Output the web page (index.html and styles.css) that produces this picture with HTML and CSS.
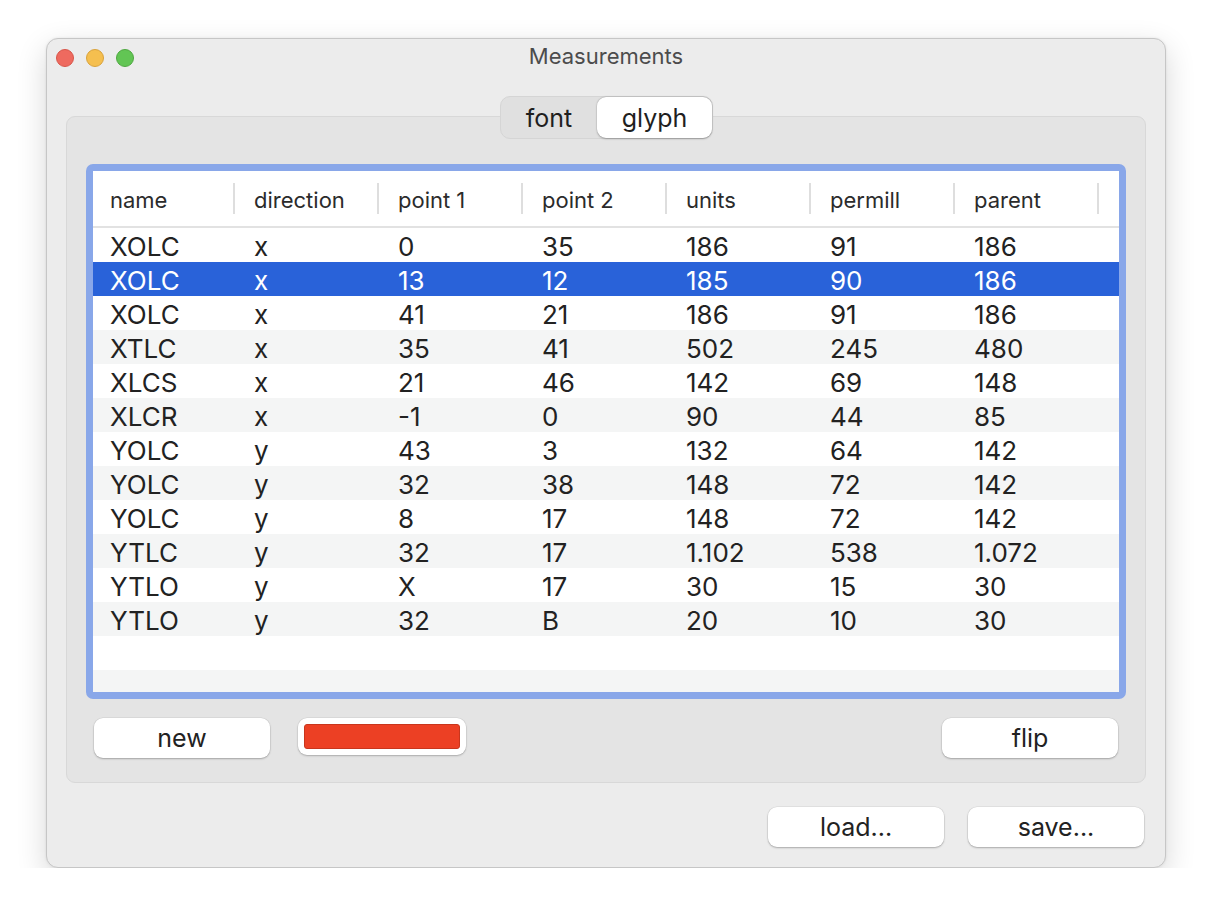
FILE: index.html
```html
<!DOCTYPE html>
<html>
<head>
<meta charset="utf-8">
<title>Measurements</title>
<link rel="stylesheet" href="styles.css">
</head>
<body>
<div class="window">
  <div class="titlebar">
    <div class="lights">
      <span class="light red"></span>
      <span class="light yellow"></span>
      <span class="light green"></span>
    </div>
    <div class="title">Measurements</div>
    <div></div>
  </div>

  <div class="segrow">
    <div class="segmented">
      <div class="seg">font</div>
      <div class="seg active">glyph</div>
    </div>
  </div>

  <div class="tabbox">
    <div class="ring">
      <div class="table">
        <div class="thead">
          <div class="hcell">name</div><div class="sep"></div>
          <div class="hcell">direction</div><div class="sep"></div>
          <div class="hcell">point 1</div><div class="sep"></div>
          <div class="hcell">point 2</div><div class="sep"></div>
          <div class="hcell">units</div><div class="sep"></div>
          <div class="hcell">permill</div><div class="sep"></div>
          <div class="hcell">parent</div><div class="sep"></div>
        </div>
        <div class="tbody">
          <div class="row"><div class="cell">XOLC</div><div class="cell">x</div><div class="cell">0</div><div class="cell">35</div><div class="cell">186</div><div class="cell">91</div><div class="cell">186</div></div>
          <div class="row selected"><div class="cell">XOLC</div><div class="cell">x</div><div class="cell">13</div><div class="cell">12</div><div class="cell">185</div><div class="cell">90</div><div class="cell">186</div></div>
          <div class="row"><div class="cell">XOLC</div><div class="cell">x</div><div class="cell">41</div><div class="cell">21</div><div class="cell">186</div><div class="cell">91</div><div class="cell">186</div></div>
          <div class="row alt"><div class="cell">XTLC</div><div class="cell">x</div><div class="cell">35</div><div class="cell">41</div><div class="cell">502</div><div class="cell">245</div><div class="cell">480</div></div>
          <div class="row"><div class="cell">XLCS</div><div class="cell">x</div><div class="cell">21</div><div class="cell">46</div><div class="cell">142</div><div class="cell">69</div><div class="cell">148</div></div>
          <div class="row alt"><div class="cell">XLCR</div><div class="cell">x</div><div class="cell">-1</div><div class="cell">0</div><div class="cell">90</div><div class="cell">44</div><div class="cell">85</div></div>
          <div class="row"><div class="cell">YOLC</div><div class="cell">y</div><div class="cell">43</div><div class="cell">3</div><div class="cell">132</div><div class="cell">64</div><div class="cell">142</div></div>
          <div class="row alt"><div class="cell">YOLC</div><div class="cell">y</div><div class="cell">32</div><div class="cell">38</div><div class="cell">148</div><div class="cell">72</div><div class="cell">142</div></div>
          <div class="row"><div class="cell">YOLC</div><div class="cell">y</div><div class="cell">8</div><div class="cell">17</div><div class="cell">148</div><div class="cell">72</div><div class="cell">142</div></div>
          <div class="row alt"><div class="cell">YTLC</div><div class="cell">y</div><div class="cell">32</div><div class="cell">17</div><div class="cell">1.102</div><div class="cell">538</div><div class="cell">1.072</div></div>
          <div class="row"><div class="cell">YTLO</div><div class="cell">y</div><div class="cell">X</div><div class="cell">17</div><div class="cell">30</div><div class="cell">15</div><div class="cell">30</div></div>
          <div class="row alt"><div class="cell">YTLO</div><div class="cell">y</div><div class="cell">32</div><div class="cell">B</div><div class="cell">20</div><div class="cell">10</div><div class="cell">30</div></div>
          <div class="row"></div>
          <div class="row alt filler"></div>
        </div>
      </div>
    </div>

    <div class="tabbuttons">
      <button class="btn">new</button>
      <div class="colorwell"><div class="swatch"></div></div>
      <button class="btn push-right">flip</button>
    </div>
  </div>

  <div class="bottombuttons">
    <button class="btn">load...</button>
    <button class="btn">save...</button>
  </div>
</div>
</body>
</html>
```

FILE: styles.css
```css
html, body {
  margin: 0;
  padding: 0;
  background: #ffffff;
}

body {
  font-family: "Inter", "Liberation Sans", sans-serif;
  color: #222222;
}

.window {
  margin: 38px 0 0 46px;
  width: 1120px;
  height: 830px;
  box-sizing: border-box;
  background: #ececec;
  border: 1px solid #c6c6c6;
  border-radius: 12px;
  box-shadow: 0 10px 30px rgba(0, 0, 0, 0.16), 0 0 3px rgba(0, 0, 0, 0.08);
  display: flex;
  flex-direction: column;
}

.titlebar {
  height: 37px;
  display: grid;
  grid-template-columns: 1fr auto 1fr;
  align-items: center;
}

.lights {
  display: flex;
  gap: 12px;
  padding-left: 9px;
}

.light {
  width: 18px;
  height: 18px;
  border-radius: 50%;
  box-sizing: border-box;
}

.red { background: #ee6a5f; border: 1px solid #d85549; }
.yellow { background: #f5bf4f; border: 1px solid #d9a23a; }
.green { background: #62c554; border: 1px solid #4ea840; }

.title {
  font-size: 22px;
  color: #4c4c4c;
  line-height: 1;
  padding-bottom: 3px;
}

.segrow {
  margin-top: 20px;
  display: flex;
  justify-content: center;
  position: relative;
  z-index: 1;
}

.segmented {
  display: flex;
  height: 43px;
  box-sizing: border-box;
  background: #e0e0e0;
  border: 1px solid #d5d5d5;
  border-radius: 10px;
  padding: 0;
  margin-left: 1px;
}

.seg {
  display: flex;
  align-items: center;
  justify-content: center;
  font-size: 25px;
  color: #1f1f1f;
  width: 96px;
  height: 41px;
}

.seg.active {
  width: 115px;
  height: 41px;
  background: #ffffff;
  border-radius: 9px;
  box-shadow: 0 0.5px 2px rgba(0, 0, 0, 0.28), 0 0 0 0.5px rgba(0, 0, 0, 0.06);
}

.tabbox {
  margin: -23px 19px 0 19px;
  height: 667px;
  box-sizing: border-box;
  background: #e4e4e4;
  border: 1px solid #d8d8d8;
  border-radius: 9px;
  padding: 47px 19px 0 19px;
}

.ring {
  width: 1040px;
  height: 535px;
  box-sizing: border-box;
  border: 7px solid #89a7e9;
  border-radius: 7px;
  background: #ffffff;
  overflow: hidden;
}

.table {
  display: flex;
  flex-direction: column;
}

.thead {
  height: 55px;
  border-bottom: 2px solid #e2e2e2;
  display: flex;
  align-items: center;
}

.hcell {
  width: 140px;
  box-sizing: border-box;
  padding-left: 17px;
  padding-top: 3px;
  font-size: 22px;
  color: #2b2b2b;
  white-space: nowrap;
}

.sep {
  width: 2px;
  height: 31px;
  background: #dedede;
  margin-right: 2px;
}

.row {
  height: 34px;
  display: flex;
  align-items: center;
  background: #ffffff;
}

.row.alt {
  background: #f4f5f5;
}

.row.filler {
  height: 22px;
}

.row.selected {
  background: #2962d9;
  color: #ffffff;
}

.cell {
  width: 144px;
  box-sizing: border-box;
  padding-left: 17px;
  padding-top: 3px;
  font-size: 26px;
  line-height: 30px;
  white-space: nowrap;
}

.tabbuttons {
  margin-top: 19px;
  padding: 0 8px;
  display: flex;
  align-items: flex-start;
}

.btn {
  width: 176px;
  height: 40px;
  border: none;
  border-radius: 9px;
  background: #ffffff;
  box-shadow: 0 1px 2px rgba(0, 0, 0, 0.25), 0 0 0 0.5px rgba(0, 0, 0, 0.08);
  font-family: "Inter", "Liberation Sans", sans-serif;
  font-size: 25px;
  color: #222222;
  padding: 0;
}

.colorwell {
  margin-left: 28px;
  width: 168px;
  height: 37px;
  box-sizing: border-box;
  background: #ffffff;
  border-radius: 9px;
  box-shadow: 0 1px 2px rgba(0, 0, 0, 0.22), 0 0 0 0.5px rgba(0, 0, 0, 0.08);
  padding: 6px;
}

.swatch {
  height: 100%;
  box-sizing: border-box;
  background: #ec4024;
  border: 1px solid #c8361d;
  border-radius: 3px;
}

.push-right {
  margin-left: auto;
}

.bottombuttons {
  margin-top: 24px;
  padding-right: 21px;
  display: flex;
  justify-content: flex-end;
  gap: 24px;
}
```
